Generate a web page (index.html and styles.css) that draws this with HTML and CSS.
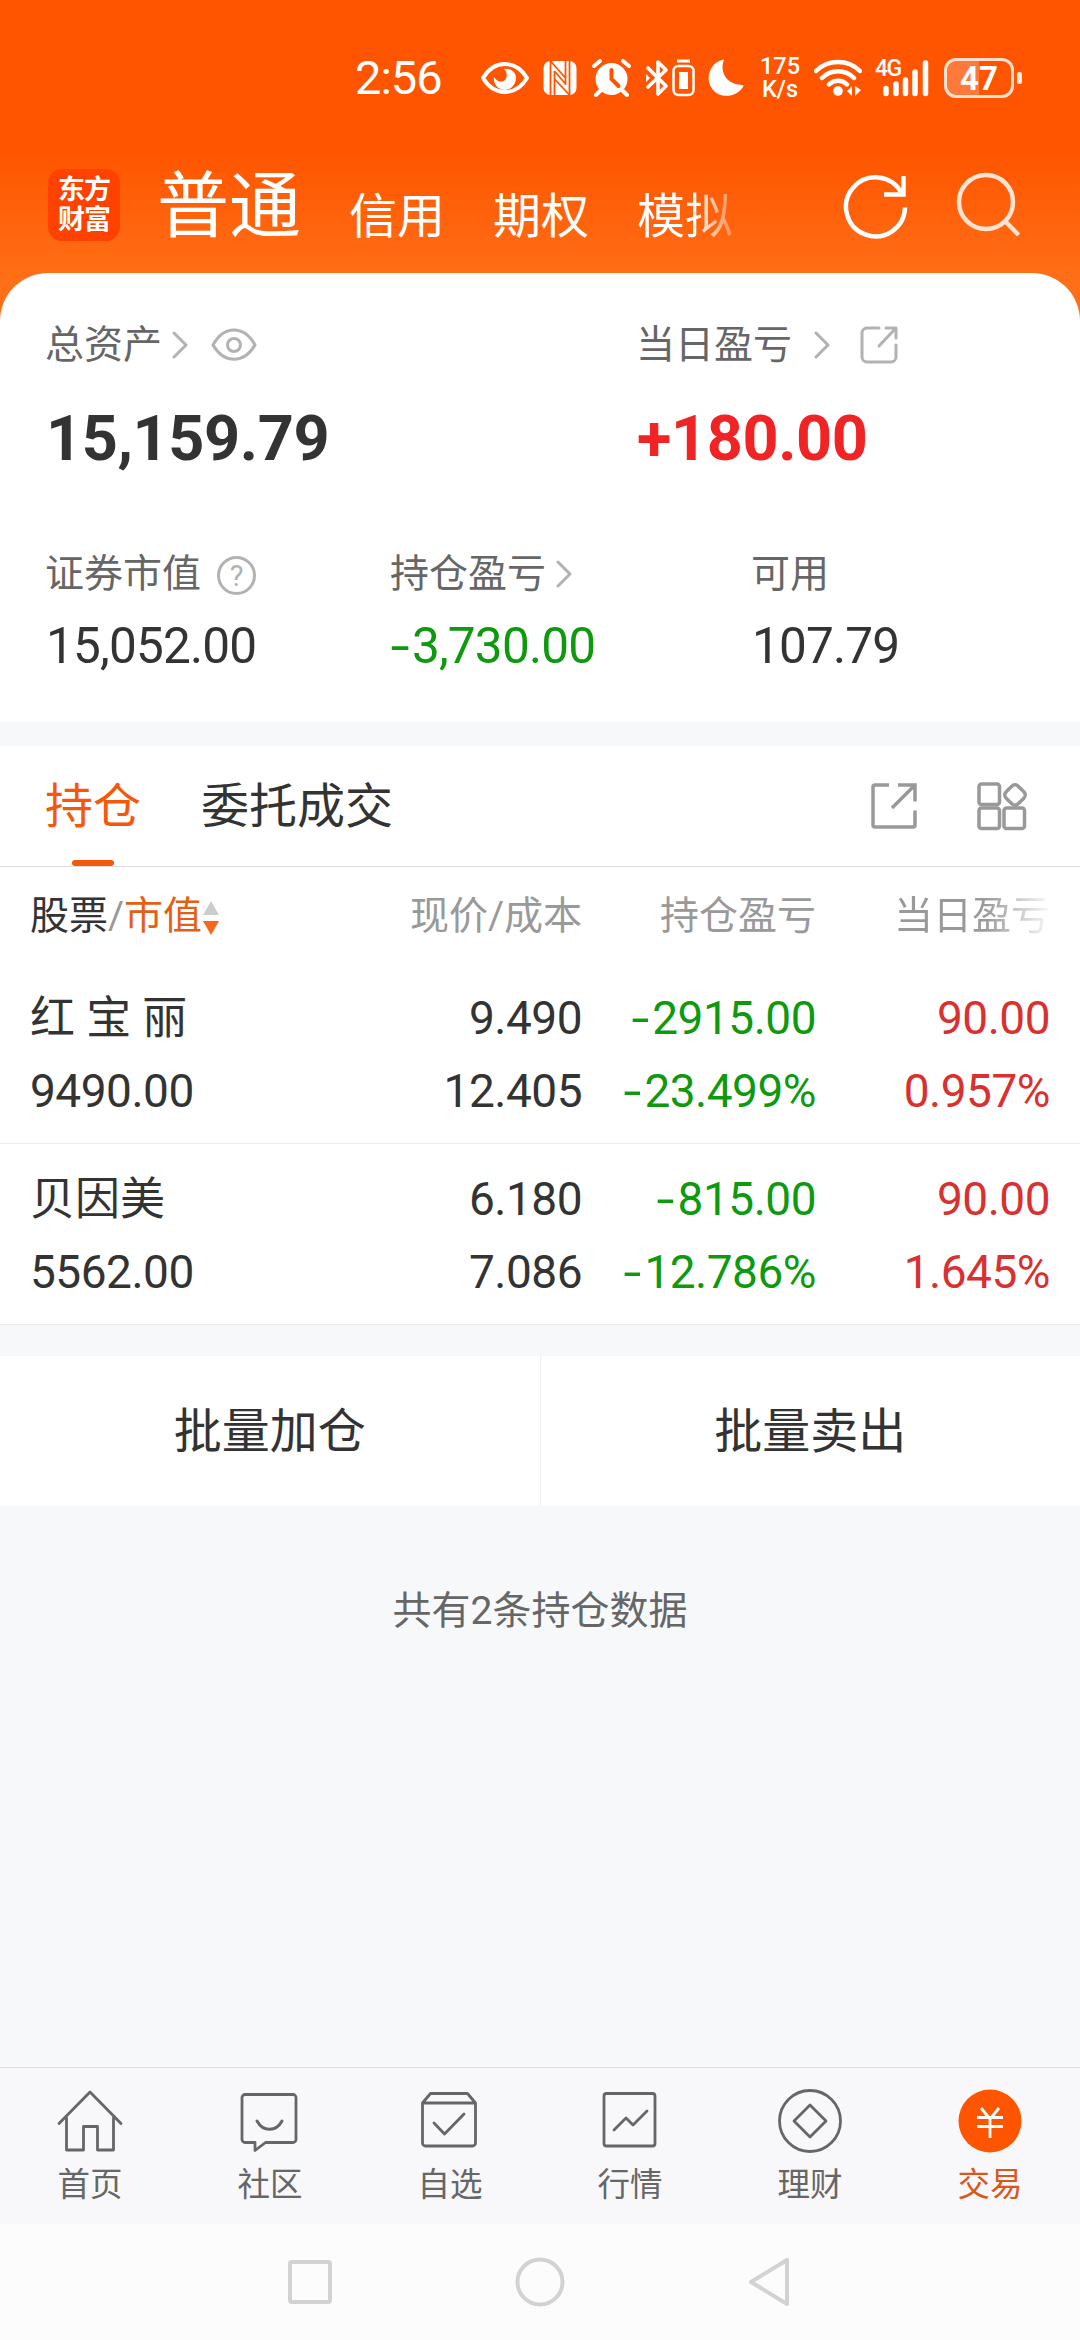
FILE: index.html
```
<!DOCTYPE html>
<html lang="zh-CN">
<head>
    <meta charset="UTF-8">
    <meta name="viewport" content="width=device-width, initial-scale=1.0">
    <title>交易</title>
    <link rel="stylesheet" href="styles.css">
</head>
<body>
<div class="app">
    <div class="top">
        <!-- 状态栏 -->
        <div class="status-bar">
            <span class="clock">2:56</span>
            <svg class="st-eye" width="50" height="36" viewBox="0 0 50 36" fill="none">
                <path d="M3 18C9 8 17 4 25 4s16 4 22 14c-6 10-14 14-22 14S9 28 3 18z" stroke="#fff" stroke-width="4" stroke-linejoin="round"/>
                <path d="M24 9c7-1 12 3 12 9s-5 12-11 12c-7 0-12-6-11-13 3 5 8 6 11 3 3-4 2-8-1-11z" fill="#fff"/>
            </svg>
            <svg class="st-nfc" width="34" height="36" viewBox="0 0 34 36">
                <rect x="0.500" y="1" width="33" height="34" rx="7" fill="#fff"/>
                <path d="M7.500 1v34M26.500 1v34M11.500 11v24M22.500 1v24M7.500 1l15 17M11.500 11l11 13M11.500 19l15 16" stroke="#ff5500" stroke-width="1.800" fill="none"/>
            </svg>
            <svg class="st-alarm" width="39" height="38" viewBox="0 0 39 38" fill="none">
                <circle cx="19.500" cy="20" r="16" fill="#fff"/>
                <path d="M2 7l6-5M37 7l-6-5M8 32l-4 4M31 32l4 4" stroke="#fff" stroke-width="4" stroke-linecap="round"/>
                <path d="M19.500 11v9l7 7" stroke="#ff5500" stroke-width="4" stroke-linecap="round"/>
            </svg>
            <svg class="st-bt" width="24" height="38" viewBox="0 0 24 38" fill="none">
                <path d="M3 9l18 18-8 8V3l8 8L3 28" stroke="#fff" stroke-width="3.600" stroke-linejoin="round" stroke-linecap="round"/>
                <path d="M1 15l4 4-4 4z" fill="#fff"/>
            </svg>
            <svg class="st-btbat" width="23" height="38" viewBox="0 0 23 38" fill="none">
                <path d="M5 2h13" stroke="#fff" stroke-width="3"/>
                <rect x="1.500" y="7" width="20" height="29" rx="5" stroke="#fff" stroke-width="2.500"/>
                <rect x="7" y="13" width="9" height="17" fill="#fff"/>
            </svg>
            <svg class="st-moon" width="36" height="38" viewBox="0 0 36 38">
                <path d="M16 1C11 13 19 26 34 26c2 0 1.500 1 1 2C27 41 5 40 1 23-1 12 6 3 14 1c1-.5 2-.5 2 0z" fill="#fff"/>
            </svg>
            <div class="net-speed"><span>175</span><span>K/s</span></div>
            <svg class="st-wifi" width="48" height="38" viewBox="0 0 48 38" fill="none">
                <path d="M2 12c12-12 32-12 44 0M8 19c9-9 23-9 32 0M15 25.500c5-5 13-5 18 0" stroke="#fff" stroke-width="4.500" stroke-linecap="round"/>
                <circle cx="24" cy="32" r="4.800" fill="#fff"/>
                <path d="M38 27v10l-5-5zM41 27v10l6-6z" fill="#fff"/>
            </svg>
            <div class="signal">
                <span class="signal-type">4G</span>
                <svg width="48" height="38" viewBox="0 0 48 38" stroke="#fff" stroke-width="5.500" stroke-linecap="round">
                    <path d="M4 29.500v5M14 25v9.500M23.500 21v13.500M33 13v21.500M43.500 4v30.500"/>
                </svg>
            </div>
            <div class="battery"><span>47</span></div>
            <i class="battery-cap"></i>
        </div>

        <!-- 账户类型 -->
        <div class="title-bar">
            <div class="logo"><span>东方</span><span>财富</span></div>
            <span class="account active">普通</span>
            <span class="account">信用</span>
            <span class="account">期权</span>
            <span class="account faded">模拟</span>
            <svg class="refresh" width="66" height="66" viewBox="0 0 66 66" fill="none" stroke="#fff" stroke-width="4.500">
                <path d="M62 34.500A29.500 29.500 0 1 1 58 19"/>
                <path d="M60.500 3v18.500H41"/>
            </svg>
            <svg class="search" width="66" height="66" viewBox="0 0 66 66" fill="none" stroke="#ffe3d3" stroke-width="4.500">
                <circle cx="30" cy="31" r="27"/>
                <path d="M49 50l13.500 14"/>
            </svg>
        </div>

        <!-- 资产 -->
        <div class="card">
            <div class="summary">
                <div class="summary-item">
                    <div class="label">总资产
                        <svg class="arrow near" width="16" height="28" viewBox="0 0 16 28"><path d="M2 2l12 12L2 26"/></svg>
                        <svg class="eye" width="46" height="34" viewBox="0 0 46 34"><path d="M2 17C13-3 33-3 44 17 33 36 13 36 2 17z"/><circle cx="23" cy="17" r="6.500"/></svg>
                    </div>
                    <div class="total">15,159.79</div>
                </div>
                <div class="summary-item">
                    <div class="label">当日盈亏
                        <svg class="arrow far" width="16" height="28" viewBox="0 0 16 28"><path d="M2 2l12 12L2 26"/></svg>
                        <svg class="share" width="40" height="40" viewBox="0 0 40 40"><path d="M20 3H8a5 5 0 0 0-5 5v24a5 5 0 0 0 5 5h24a5 5 0 0 0 5-5V20M27 3h10v10M36 4L20 21"/></svg>
                    </div>
                    <div class="total red-strong">+180.00</div>
                </div>
            </div>
            <div class="details">
                <div class="detail-item">
                    <div class="label">证券市值
                        <span class="help">?</span>
                    </div>
                    <div class="amount">15,052.00</div>
                </div>
                <div class="detail-item">
                    <div class="label">持仓盈亏
                        <svg class="arrow near" width="16" height="28" viewBox="0 0 16 28"><path d="M2 2l12 12L2 26"/></svg>
                    </div>
                    <div class="amount green"><span class="minus">-</span>3,730.00</div>
                </div>
                <div class="detail-item">
                    <div class="label">可用</div>
                    <div class="amount">107.79</div>
                </div>
            </div>
        </div>
    </div>

    <!-- 持仓 -->
    <div class="tabs">
        <span class="tab selected">持仓</span>
        <span class="tab">委托成交</span>
        <svg class="tab-share" width="48" height="48" viewBox="0 0 48 48"><path d="M19 3H5a2 2 0 0 0-2 2v38a2 2 0 0 0 2 2h38a2 2 0 0 0 2-2V28.500M28 3h17v16.500M44 4L22 26"/></svg>
        <svg class="tab-grid" width="52" height="50" viewBox="0 0 52 50">
            <rect x="3" y="3" width="20.500" height="20.500" rx="2.500"/>
            <rect x="3" y="27" width="20.500" height="20.500" rx="2.500"/>
            <rect x="28" y="27" width="20.500" height="20.500" rx="2.500"/>
            <rect x="30.500" y="5.500" width="17" height="17" rx="4.500" transform="rotate(45 39 14)"/>
        </svg>
    </div>
    <div class="table">
        <div class="row head">
            <span class="name"><b>股票</b>/<em>市值</em><svg class="sort" width="16" height="34" viewBox="0 0 16 34"><path d="M8 0l8 14H0z" fill="#ccc"/><path d="M8 34l8-14H0z" fill="#f9651a"/></svg></span>
            <span>现价/成本</span>
            <span>持仓盈亏</span>
            <span class="head-fade">当日盈亏</span>
        </div>
        <div class="row">
            <div class="name"><p class="stock">红 宝 丽</p><p>9490.00</p></div>
            <div><p>9.490</p><p>12.405</p></div>
            <div class="green"><p><span class="minus">-</span>2915.00</p><p><span class="minus">-</span>23.499%</p></div>
            <div class="red"><p>90.00</p><p>0.957%</p></div>
        </div>
        <div class="row">
            <div class="name"><p class="stock">贝因美</p><p>5562.00</p></div>
            <div><p>6.180</p><p>7.086</p></div>
            <div class="green"><p><span class="minus">-</span>815.00</p><p><span class="minus">-</span>12.786%</p></div>
            <div class="red"><p>90.00</p><p>1.645%</p></div>
        </div>
    </div>
    <div class="batch">
        <span>批量加仓</span>
        <span>批量卖出</span>
    </div>
    <p class="count">共有2条持仓数据</p>

    <!-- 底部导航 -->
    <div class="bottom-nav">
        <div class="nav-item">
            <svg width="66" height="66" viewBox="0 0 66 66"><path d="M2 34.500L33 3l31 31.500M9.500 29v32h17V37.500h14V61h16V29"/></svg>
            <span>首页</span>
        </div>
        <div class="nav-item">
            <svg width="66" height="66" viewBox="0 0 66 66"><path d="M8 5.500h48a3 3 0 0 1 3 3v42a3 3 0 0 1-3 3H28.500L18 61.500v-8H8a3 3 0 0 1-3-3v-42a3 3 0 0 1 3-3z"/><path d="M20 32c6 11 19 11 25 0" stroke-width="3"/></svg>
            <span>社区</span>
        </div>
        <div class="nav-item">
            <svg width="66" height="66" viewBox="0 0 66 66"><path d="M5.500 14h53v40a3 3 0 0 1-3 3h-47a3 3 0 0 1-3-3zM5.500 14l8-9.500h37l8 9.500M17 34l10.500 11L47 25"/></svg>
            <span>自选</span>
        </div>
        <div class="nav-item">
            <svg width="66" height="66" viewBox="0 0 66 66"><rect x="7" y="4.500" width="51" height="52.500" rx="2.500"/><path d="M17 41l12-12 7 7 14-14"/></svg>
            <span>行情</span>
        </div>
        <div class="nav-item">
            <svg width="66" height="66" viewBox="0 0 66 66"><circle cx="33" cy="32" r="30.500"/><path d="M33 16l16 16-16 16-16-16z"/></svg>
            <span>理财</span>
        </div>
        <div class="nav-item current">
            <svg width="66" height="66" viewBox="0 0 66 66"><circle cx="33" cy="32" r="31.500" class="coin"/><path d="M24 19l9 11 9-11M33 30v19M20 28.500h26M20 37.500h26" class="yen"/></svg>
            <span>交易</span>
        </div>
    </div>

    <!-- 系统按键 -->
    <div class="system-nav">
        <svg width="48" height="52" viewBox="0 0 48 52"><rect x="4" y="6" width="40" height="40" rx="2"/></svg>
        <svg width="52" height="52" viewBox="0 0 52 52"><circle cx="26" cy="26" r="22.500"/></svg>
        <svg width="48" height="52" viewBox="0 0 48 52"><path d="M41 4v44L5 26z"/></svg>
    </div>
</div>
</body>
</html>
```
FILE: styles.css
```
* {
    box-sizing: border-box;
}

body {
    margin: 0;
    font-family: Roboto, "Noto Sans CJK SC", sans-serif;
    color: #333;
}

p {
    margin: 0;
}

svg {
    display: block;
    flex-shrink: 0;
}

.app {
    width: 1080px;
    height: 2340px;
    display: flex;
    flex-direction: column;
    background: #f6f8fa;
    overflow: hidden;
}

.top {
    height: 722px;
    background: linear-gradient(to bottom, #ff5500 0, #ff5500 150px, #ff6f17 280px);
}

/* 状态栏 */
.status-bar {
    height: 136px;
    padding: 20px 0 0 355px;
    display: flex;
    align-items: center;
    color: #fff;
}

.clock {
    width: 125px;
    font-size: 47px;
    line-height: 60px;
    letter-spacing: -1px;
}

.st-nfc {
    margin-left: 13px;
}

.st-alarm {
    margin-left: 15px;
}

.st-bt {
    margin-left: 14px;
}

.st-btbat {
    margin-left: 3px;
}

.st-moon {
    margin-left: 13px;
}

.net-speed {
    width: 40px;
    margin-left: 16px;
    display: flex;
    flex-direction: column;
    font-size: 23.500px;
    line-height: 23px;
    font-weight: 500;
    text-align: center;
}

.st-wifi {
    margin-left: 14px;
}

.signal {
    position: relative;
    margin-left: 20px;
}

.signal-type {
    position: absolute;
    left: -7px;
    top: -2px;
    font-size: 23px;
    line-height: 23px;
    font-weight: 500;
    letter-spacing: -1.5px;
}

.battery {
    width: 70px;
    height: 40px;
    margin-left: 14px;
    border: 3px solid #ffe0d0;
    border-radius: 12px;
    background: linear-gradient(to right, #ff7a3a 50%, transparent 50%);
    font-size: 33px;
    line-height: 35px;
    font-weight: 700;
    text-align: center;
}

.battery-cap {
    width: 5px;
    height: 12px;
    margin-left: 3px;
    border-radius: 2px;
    background: #ffe8dc;
}

/* 标题栏 */
.title-bar {
    height: 137px;
    padding-left: 48px;
    display: flex;
    color: #fff;
}

.logo {
    width: 72px;
    height: 72px;
    margin: 33px 37px 0 0;
    padding-top: 6px;
    display: flex;
    flex-direction: column;
    align-items: center;
    border-radius: 14px;
    background: #ff4200;
    font-size: 27px;
    line-height: 30px;
    font-weight: 700;
    letter-spacing: -1px;
}

.account {
    margin: 49px 48px 0 0;
    font-size: 48px;
    line-height: 64px;
}

.account.active {
    margin: 29px 48px 0 0;
    font-size: 72px;
    line-height: 84px;
}

.account.faded {
    margin-right: 0;
    background: linear-gradient(to right, #fff 60%, #ff8a4a 100%);
    background-clip: text;
    -webkit-background-clip: text;
    color: transparent;
}

.refresh {
    margin: 37px 0 0 110px;
}

.search {
    margin: 35px 0 0 47px;
}

/* 资产 */
.card {
    height: 449px;
    padding: 42px 45px 0;
    border-radius: 48px 48px 0 0;
    background: #fff;
}

.summary {
    height: 229px;
    display: grid;
    grid-template-columns: 591px 1fr;
}

.details {
    display: grid;
    grid-template-columns: 345px 361px 1fr;
}

.label {
    height: 60px;
    display: flex;
    align-items: center;
    font-size: 39px;
    line-height: 60px;
    color: #666;
}

.label svg {
    fill: none;
    stroke: #b2b2b2;
    stroke-width: 3;
    stroke-linejoin: round;
    stroke-linecap: round;
}

.near {
    margin-left: 10px;
}

.far {
    margin-left: 22px;
}

.eye {
    margin-left: 23px;
}

.share {
    margin-left: 29px;
}

.help {
    width: 39px;
    height: 39px;
    margin: 2px 0 0 16px;
    border: 3px solid #b2b2b2;
    border-radius: 50%;
    font-size: 29px;
    line-height: 34px;
    text-align: center;
    color: #b2b2b2;
}

.total {
    margin-top: 24px;
    padding-left: 1px;
    font-size: 63px;
    line-height: 80px;
    font-weight: 700;
    letter-spacing: -0.4px;
}

.amount {
    margin-top: 12px;
    padding-left: 1px;
    font-size: 49.500px;
    line-height: 60px;
    letter-spacing: -0.8px;
}

.minus {
    display: inline-block;
    transform: scaleX(1.4);
    margin: 0 6px 0 2px;
}

.red-strong {
    color: #f02424;
}

.green {
    color: #0f990f;
}

.red {
    color: #d93030;
}

/* 标签 */
.tabs {
    height: 121px;
    margin-top: 24px;
    padding-left: 45px;
    display: flex;
    align-items: center;
    border-bottom: 1px solid #ddd;
    background: #fff;
}

.tab {
    margin-right: 60px;
    padding-top: 2px;
    font-size: 48px;
    line-height: 118px;
}

.tab.selected {
    position: relative;
    color: #f4590b;
}

.tab.selected::after {
    content: "";
    position: absolute;
    left: 27px;
    bottom: 0;
    width: 42px;
    height: 6px;
    border-radius: 3px;
    background: #f4590b;
}

.tab-share,
.tab-grid {
    fill: none;
    stroke: #999;
    stroke-width: 3.500;
}

.tab-share {
    margin-left: 417px;
}

.tab-grid {
    margin-left: 58px;
}

/* 持仓列表 */
.table {
    background: #fff;
}

.row {
    height: 181px;
    padding: 19px 30px 0;
    display: grid;
    grid-template-columns: 318px 234px 234px 234px;
    border-bottom: 1px solid #eaecee;
    font-size: 46px;
    line-height: 73px;
    letter-spacing: -0.5px;
    text-align: right;
}

.row.head {
    height: 96px;
    padding-top: 17px;
    border: 0;
    font-size: 39px;
    line-height: 64px;
    letter-spacing: 0;
    color: #999;
}

.row .name {
    text-align: left;
}

.head .name {
    display: flex;
    align-items: center;
    height: 64px;
}

.head b {
    font-weight: 400;
    color: #333;
}

.head em {
    font-style: normal;
    color: #e35f14;
}

.sort {
    margin: 4px 0 0 1px;
}

.head-fade {
    background: linear-gradient(to right, #999 72%, #fff 102%);
    background-clip: text;
    -webkit-background-clip: text;
    color: transparent;
}

.row .stock {
    font-size: 45px;
    letter-spacing: 0;
}

.batch {
    height: 150px;
    margin-top: 31px;
    display: flex;
    background: #fff;
}

.batch span {
    flex: 1;
    font-size: 48px;
    line-height: 152px;
    text-align: center;
}

.batch span:first-child {
    border-right: 1px solid #eee;
}

.count {
    margin-top: 75px;
    font-size: 39px;
    line-height: 60px;
    text-align: center;
    color: #666;
}

/* 底部导航 */
.bottom-nav {
    height: 157px;
    margin-top: auto;
    display: flex;
    border-top: 1px solid #ddd;
    background: #f8f8fa;
}

.nav-item {
    width: 180px;
    padding-top: 21px;
    display: flex;
    flex-direction: column;
    align-items: center;
    font-size: 32.500px;
    line-height: 60px;
    color: #666;
}

.nav-item svg {
    fill: none;
    stroke: #666;
    stroke-width: 2.800;
    stroke-linejoin: round;
    stroke-linecap: round;
}

.nav-item.current {
    color: #d9571a;
}

.nav-item .coin {
    fill: #ff5500;
    stroke: none;
}

.nav-item .yen {
    stroke: #fff;
    stroke-linecap: butt;
}

.system-nav {
    height: 116px;
    display: flex;
    justify-content: center;
    align-items: center;
    gap: 180px;
    background: #fcfcfc;
    fill: none;
    stroke: #d2d2d2;
    stroke-width: 4;
    stroke-linejoin: round;
}
```
